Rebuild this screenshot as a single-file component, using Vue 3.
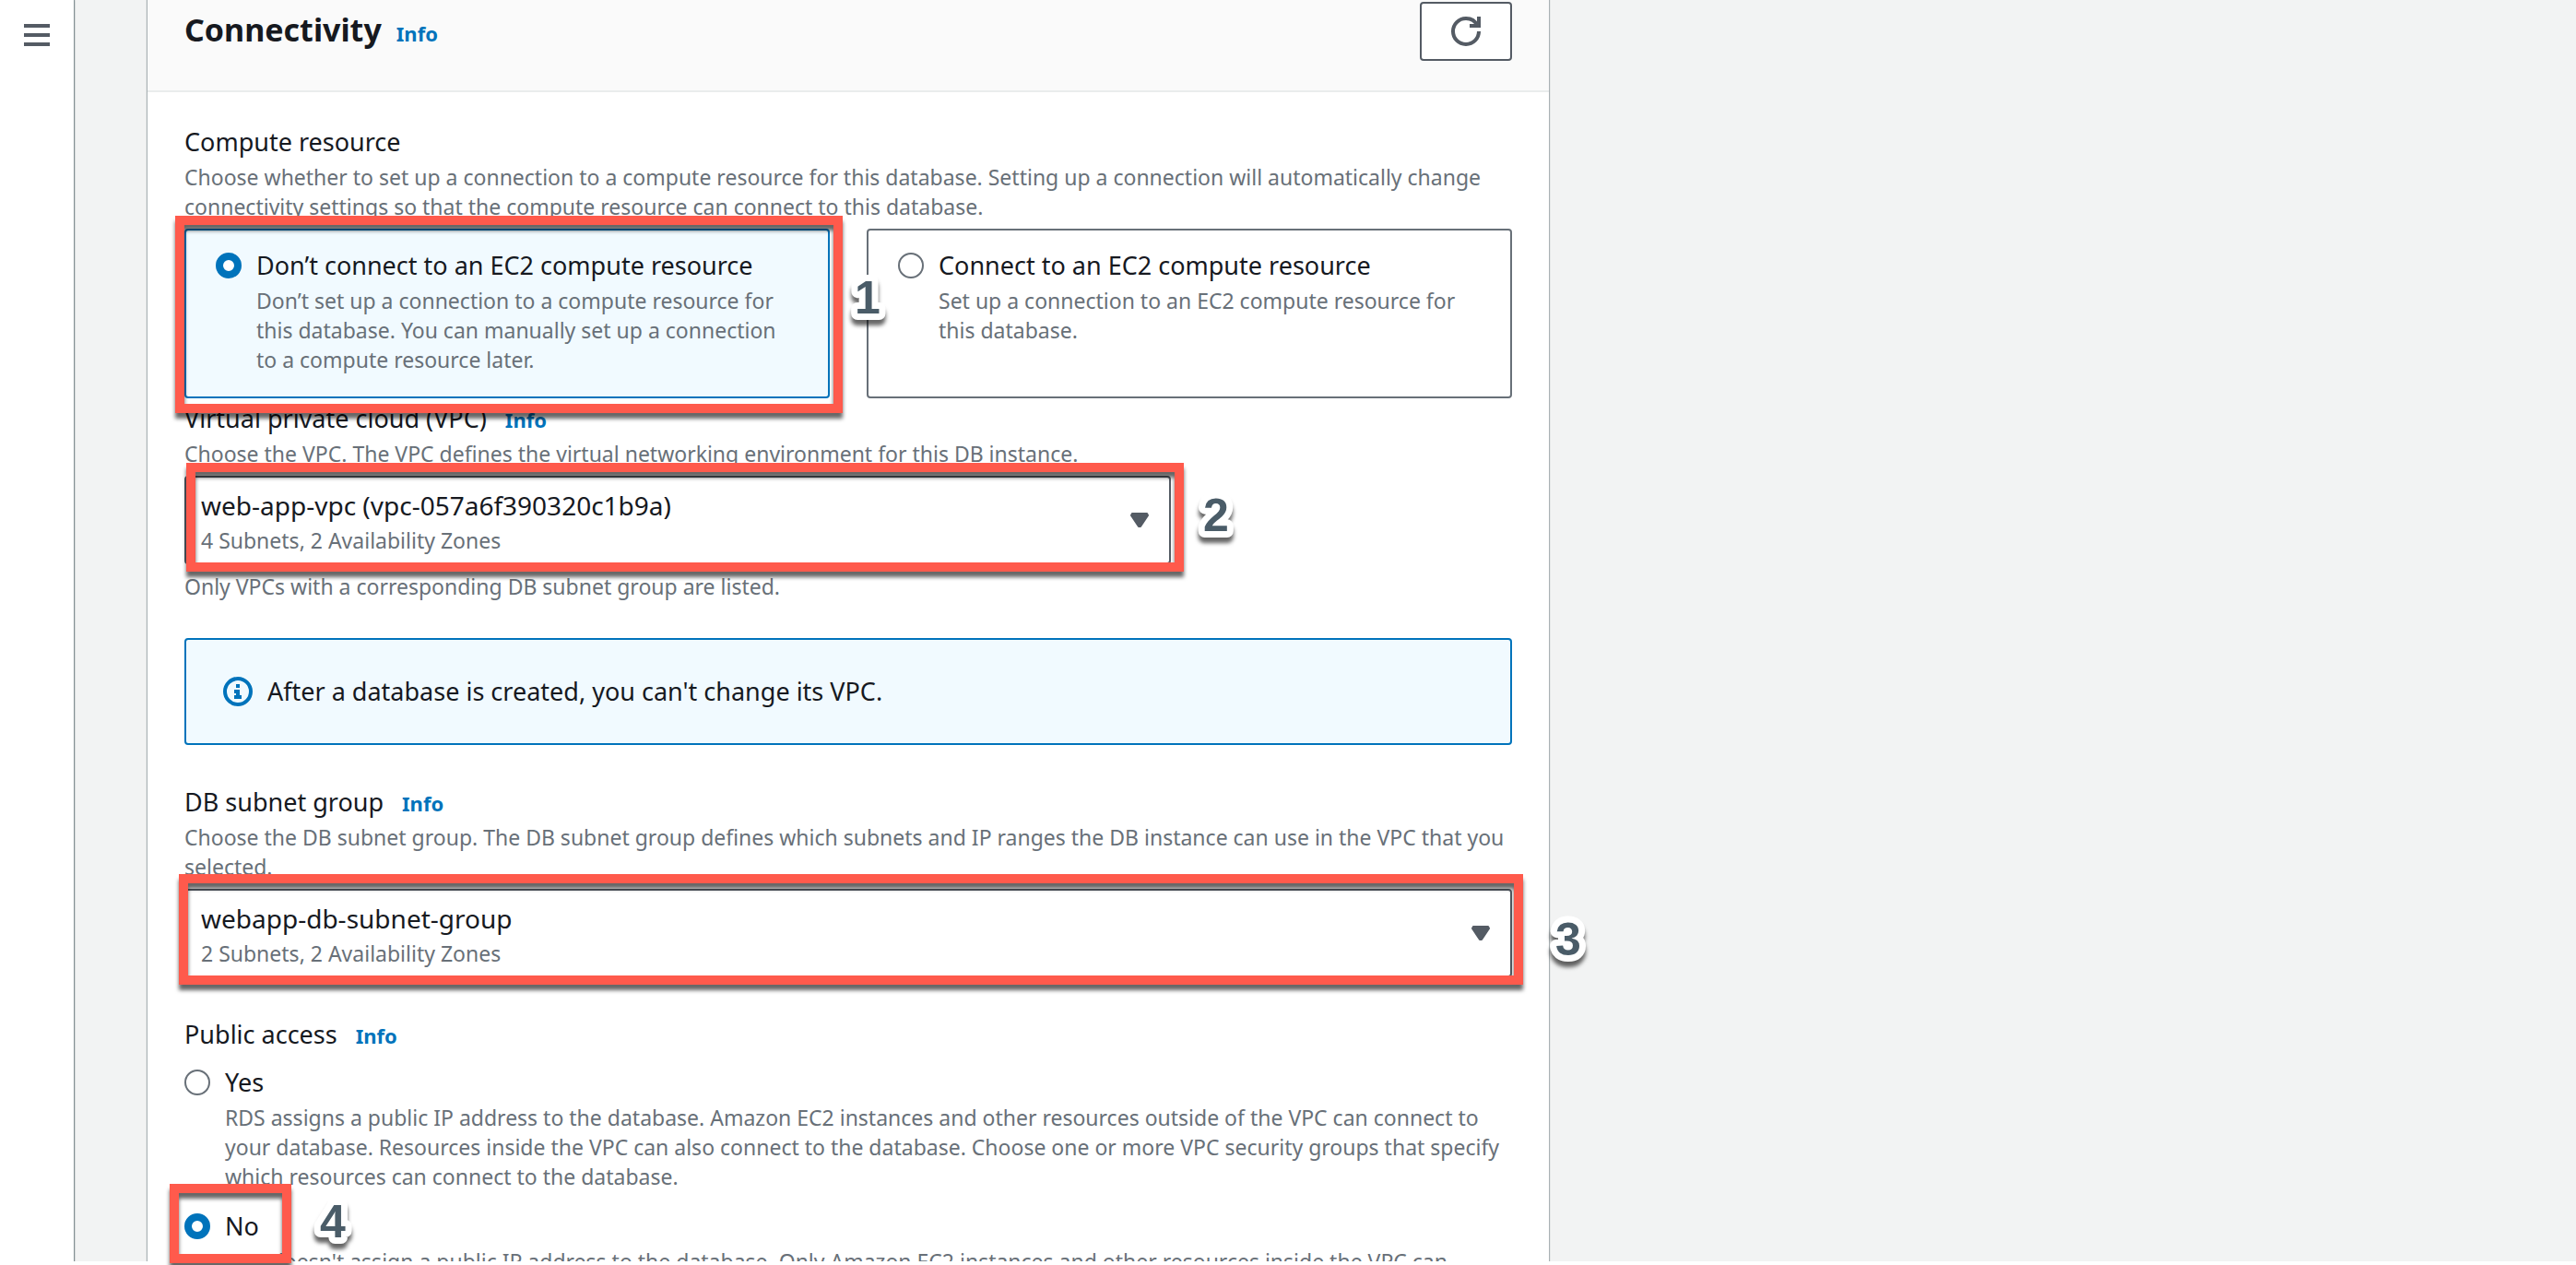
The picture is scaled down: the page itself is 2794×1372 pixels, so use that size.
<script setup>
import { ref } from 'vue'

const compute = ref('none')
const publicAccess = ref('no')
const vpc = ref('web-app-vpc')
const subnetGroup = ref('webapp-db-subnet-group')

const computeOptions = [
  {
    value: 'none',
    label: 'Don’t connect to an EC2 compute resource',
    text: 'Don’t set up a connection to a compute resource for\nthis database. You can manually set up a connection\nto a compute resource later.',
    step: 1,
  },
  {
    value: 'ec2',
    label: 'Connect to an EC2 compute resource',
    text: 'Set up a connection to an EC2 compute resource for\nthis database.',
  },
]

const accessOptions = [
  {
    value: 'yes',
    label: 'Yes',
    text: 'RDS assigns a public IP address to the database. Amazon EC2 instances and other resources outside of the VPC can connect to\nyour database. Resources inside the VPC can also connect to the database. Choose one or more VPC security groups that specify\nwhich resources can connect to the database.',
  },
  {
    value: 'no',
    label: 'No',
    text: 'RDS doesn\'t assign a public IP address to the database. Only Amazon EC2 instances and other resources inside the VPC can',
    step: 4,
  },
]
</script>

<template>
  <div class="page">
    <nav class="rail" aria-label="Service navigation">
      <button class="menu" type="button" aria-label="Open navigation">
        <svg viewBox="0 0 28 24" width="28" height="24" aria-hidden="true">
          <path d="M0 2h28M0 12h28M0 22h28" stroke="currentColor" stroke-width="4" />
        </svg>
      </button>
    </nav>

    <main class="content">
      <section class="panel">
        <header class="panel-header">
          <div class="title-row">
            <h2>Connectivity</h2>
            <a href="#" class="info">Info</a>
          </div>
          <button class="refresh" type="button" aria-label="Refresh">
            <svg viewBox="0 0 16 16" width="32" height="32" fill="none" stroke="currentColor" stroke-width="2" aria-hidden="true">
              <path d="M10 5h5V0" />
              <path d="M15 8a6.957 6.957 0 0 1-7 7 6.957 6.957 0 0 1-7-7 6.957 6.957 0 0 1 7-7 6.87 6.87 0 0 1 6.3 4" />
            </svg>
          </button>
        </header>

        <div class="panel-body">
          <fieldset class="field">
            <legend class="label">Compute resource</legend>
            <p class="hint">Choose whether to set up a connection to a compute resource for this database. Setting up a connection will automatically change
connectivity settings so that the compute resource can connect to this database.</p>
            <div class="tiles">
              <label v-for="o in computeOptions" :key="o.value" class="tile" :class="{ selected: compute === o.value }">
                <input v-model="compute" type="radio" name="compute" :value="o.value" />
                <span class="option-text">
                  <span class="label">{{ o.label }}</span>
                  <span class="hint">{{ o.text }}</span>
                </span>
                <span v-if="o.step" class="callout callout-1">
                  <svg class="step" width="28" height="50"><text y="42">{{ o.step }}</text></svg>
                </span>
              </label>
            </div>
          </fieldset>

          <div class="field">
            <div class="label-row">
              <label class="label" for="vpc">Virtual private cloud (VPC)</label>
              <a href="#" class="info">Info</a>
            </div>
            <p class="hint">Choose the VPC. The VPC defines the virtual networking environment for this DB instance.</p>
            <div class="picker narrow">
              <select id="vpc" v-model="vpc">
                <option value="web-app-vpc">web-app-vpc (vpc-057a6f390320c1b9a)</option>
              </select>
              <span class="hint detail">4 Subnets, 2 Availability Zones</span>
              <svg class="caret" viewBox="0 0 20 16" width="20" height="16" aria-hidden="true">
                <path d="M2 1h16l1 2-8 12h-2L1 3z" fill="currentColor" stroke="currentColor" stroke-width="2" stroke-linejoin="round" />
              </svg>
              <span class="callout callout-2">
                <svg class="step" width="28" height="50"><text y="42">2</text></svg>
              </span>
            </div>
            <p class="hint">Only VPCs with a corresponding DB subnet group are listed.</p>
          </div>

          <div class="alert" role="status">
            <svg viewBox="0 0 32 32" width="32" height="32" aria-hidden="true">
              <circle cx="16" cy="16" r="14" fill="none" stroke="currentColor" stroke-width="4" />
              <path d="M14 8h4v4h-4zM12 14h6v6h2v4h-8v-4h2v-2h-2z" fill="currentColor" />
            </svg>
            <span class="label">After a database is created, you can't change its VPC.</span>
          </div>

          <div class="field">
            <div class="label-row">
              <label class="label" for="subnet-group">DB subnet group</label>
              <a href="#" class="info">Info</a>
            </div>
            <p class="hint">Choose the DB subnet group. The DB subnet group defines which subnets and IP ranges the DB instance can use in the VPC that you
selected.</p>
            <div class="picker">
              <select id="subnet-group" v-model="subnetGroup">
                <option value="webapp-db-subnet-group">webapp-db-subnet-group</option>
              </select>
              <span class="hint detail">2 Subnets, 2 Availability Zones</span>
              <svg class="caret" viewBox="0 0 20 16" width="20" height="16" aria-hidden="true">
                <path d="M2 1h16l1 2-8 12h-2L1 3z" fill="currentColor" stroke="currentColor" stroke-width="2" stroke-linejoin="round" />
              </svg>
              <span class="callout callout-3">
                <svg class="step" width="28" height="50"><text y="42">3</text></svg>
              </span>
            </div>
          </div>

          <div class="field access" role="radiogroup" aria-labelledby="access-label">
            <div class="label-row">
              <span id="access-label" class="label">Public access</span>
              <a href="#" class="info">Info</a>
            </div>
            <div class="choices">
              <label v-for="o in accessOptions" :key="o.value" class="choice">
                <input v-model="publicAccess" type="radio" name="access" :value="o.value" />
                <span class="option-text">
                  <span class="label">{{ o.label }}</span>
                  <span class="hint">{{ o.text }}</span>
                </span>
                <span v-if="o.step" class="callout callout-4">
                  <svg class="step" width="28" height="50"><text y="42">{{ o.step }}</text></svg>
                </span>
              </label>
            </div>
          </div>
        </div>
      </section>
    </main>
  </div>
</template>

<style>
body {
  margin: 0;
  background: #fff;
}
</style>

<style scoped>
* {
  box-sizing: border-box;
}

.page {
  position: relative;
  display: flex;
  height: 100vh;
  overflow: hidden;
  background: #f2f3f3;
  color: #16191f;
  font-family: "Noto Sans", "Open Sans", sans-serif;
}

/* bottom edge of the viewport */
.page::after {
  content: "";
  position: absolute;
  left: 0;
  right: 0;
  bottom: 0;
  z-index: 1;
  height: 4px;
  background: #fff;
}

.rail {
  flex: none;
  width: 80px;
  padding: 26px;
  background: #fff;
  box-shadow: 1px 0 1px rgba(0, 28, 36, 0.4), 1px 0 2px rgba(0, 28, 36, 0.15);
}

.menu {
  display: block;
  padding: 0;
  border: 0;
  background: none;
  color: #545b64;
}

.menu svg,
.refresh svg {
  display: block;
}

.content {
  flex: 1;
  min-width: 0;
  padding: 0 80px;
}

.panel {
  max-width: 1520px;
  min-height: 100%;
  background: #fff;
  box-shadow: 1px 0 1px rgba(0, 28, 36, 0.3), -1px 0 1px rgba(0, 28, 36, 0.3);
}

.panel-header {
  display: flex;
  align-items: center;
  justify-content: space-between;
  padding: 2px 40px 32px;
  background: #fafafa;
  border-bottom: 2px solid #eaeded;
}

.title-row {
  display: flex;
  align-items: baseline;
  gap: 16px;
  padding-bottom: 4px;
}

h2 {
  margin: 0;
  font-size: 34px;
  line-height: 44px;
  font-weight: 700;
}

.info {
  color: #0073bb;
  font-size: 22px;
  line-height: 32px;
  font-weight: 700;
  text-decoration: none;
}

.refresh {
  display: flex;
  align-items: center;
  justify-content: center;
  width: 100px;
  height: 64px;
  padding: 0;
  border: 2px solid #545b64;
  border-radius: 4px;
  background: #fff;
  color: #545b64;
}

.panel-body {
  padding: 32px 40px;
}

.field {
  min-width: 0;
  margin: 0;
  padding: 0;
  border: 0;
}

.label-row {
  display: flex;
  align-items: baseline;
  gap: 20px;
}

.label {
  display: block;
  padding: 0;
  font-size: 27px;
  line-height: 44px;
}

.hint {
  display: block;
  margin: 0;
  color: #687078;
  font-size: 23px;
  line-height: 32px;
  white-space: pre-line;
}

.tiles {
  display: grid;
  grid-template-columns: 1fr 1fr;
  gap: 40px;
  margin-top: 8px;
}

.tile {
  position: relative;
  display: flex;
  gap: 16px;
  padding: 16px 32px 24px;
  border: 2px solid #687078;
  border-radius: 4px;
}

.tile.selected {
  border-color: #0073bb;
  background: #f1faff;
}

input[type="radio"] {
  flex: none;
  appearance: none;
  width: 28px;
  height: 28px;
  margin: 8px 0 0;
  border: 2px solid #687078;
  border-radius: 50%;
  background: #fff;
}

input[type="radio"]:checked {
  border: 8px solid #0073bb;
}

.option-text {
  min-width: 0;
}

.picker {
  position: relative;
  display: grid;
  margin: 8px 0;
}

.picker > * {
  grid-area: 1 / 1;
}

.narrow {
  width: calc(75% - 10px);
}

select {
  appearance: none;
  width: 100%;
  height: 96px;
  padding: 8px 60px 40px 16px;
  border: 2px solid #545b64;
  border-radius: 4px;
  background: #fff;
  color: #16191f;
  font-family: inherit;
  font-size: 28px;
  line-height: 44px;
}

.detail {
  align-self: end;
  padding: 0 18px 10px;
  pointer-events: none;
}

.caret {
  align-self: center;
  justify-self: end;
  margin-right: 24px;
  color: #545b64;
  pointer-events: none;
}

.alert {
  display: flex;
  align-items: center;
  gap: 16px;
  margin: 40px 0;
  padding: 34px 40px;
  border: 2px solid #0073bb;
  border-radius: 4px;
  background: #f1faff;
}

.alert svg {
  flex: none;
  color: #0073bb;
}

.access {
  margin-top: 40px;
}

.choices {
  display: grid;
  gap: 16px;
  margin-top: 8px;
}

.choice {
  position: relative;
  display: flex;
  gap: 16px;
}

/* numbered step frames laid over the form */
.callout {
  position: absolute;
  z-index: 2;
  border: 10px solid #ff5a4c;
  filter: drop-shadow(0 6px 2px rgba(0, 0, 0, 0.6));
  pointer-events: none;
}

.step {
  position: absolute;
  overflow: visible;
}

.step text {
  fill: #4a5c68;
  stroke: #fff;
  stroke-width: 14px;
  stroke-linejoin: round;
  paint-order: stroke;
  font: 700 50px "Liberation Sans", Arial, sans-serif;
}

.callout-1 {
  inset: -16px -16px -18px -12px;
}

.callout-1 .step {
  top: 54px;
  left: calc(100% + 23px);
}

.callout-2 {
  inset: -14px -14px -8px 2px;
}

.callout-2 .step {
  top: 22px;
  left: calc(100% + 31px);
}

.callout-3 {
  inset: -16px -12px -8px -6px;
}

.callout-3 .step {
  top: 36px;
  left: calc(100% + 45px);
}

.callout-4 {
  top: -24px;
  left: -16px;
  width: 132px;
  height: 86px;
}

.callout-4 .step {
  top: 6px;
  left: calc(100% + 41px);
}
</style>
